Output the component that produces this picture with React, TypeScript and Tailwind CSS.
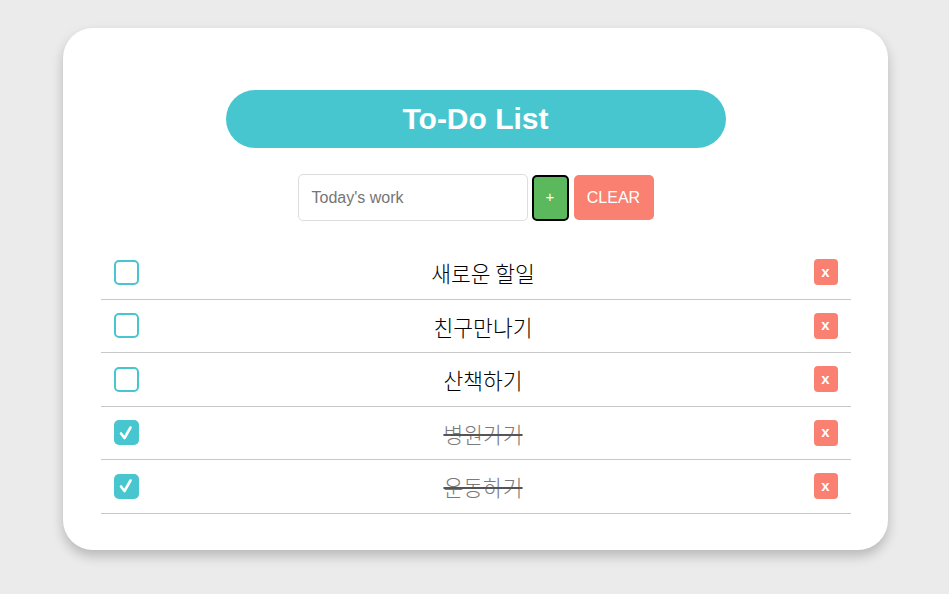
import React from "react";

const items = [
  { text: "새로운 할일", done: false },
  { text: "친구만나기", done: false },
  { text: "산책하기", done: false },
  { text: "병원가기", done: true },
  { text: "운동하기", done: true },
];

export default function App() {
  return (
    <div
      className="min-h-[594px] w-full bg-[#ebebeb] flex justify-center pt-[28px] pl-[2px]"
      style={{ fontFamily: '"Liberation Sans", Arial, "Noto Sans CJK KR", sans-serif' }}
    >
      <div className="w-[825px] h-[522px] bg-white rounded-[30px] shadow-[0_6px_12px_rgba(0,0,0,0.22)] flex flex-col items-center pt-[62px] px-[37px]">
        <div className="w-[500px] h-[58px] rounded-full bg-[#48c6cf] flex items-center justify-center">
          <h1 className="text-white font-bold text-[30px] leading-none">To-Do List</h1>
        </div>
        <div className="mt-[26px] flex items-center">
          <div className="w-[230px] h-[47px] border border-[#dddddd] rounded-[5px] flex items-center px-[13px]">
            <span className="text-[16px] text-[#757575]">Today's work</span>
          </div>
          <div className="ml-[4px] w-[37px] h-[46px] bg-[#5cb85c] border-2 border-black rounded-[5px] flex items-center justify-center text-white text-[15px]">
            +
          </div>
          <div className="ml-[5px] w-[80px] h-[45px] bg-[#fa8072] rounded-[5px] flex items-center justify-center text-white text-[16px]">
            CLEAR
          </div>
        </div>
        <div className="w-[750px] mt-[25px]">
          {items.map((it, i) => (
            <div
              key={i}
              className="h-[53.5px] border-b border-[#c8c8c8] flex items-center px-[13px]"
            >
              {it.done ? (
                <div className="w-[25px] h-[25px] rounded-[5px] bg-[#48c6cf] flex items-center justify-center">
                  <svg width="16" height="16" viewBox="0 0 16 16">
                    <path d="M3 8.5 L6.5 13 L12.5 2.5" stroke="white" strokeWidth="2.6" fill="none" strokeLinecap="round" strokeLinejoin="round" />
                  </svg>
                </div>
              ) : (
                <div className="w-[25px] h-[25px] rounded-[5px] border-2 border-[#48c6cf]" />
              )}
              <div
                className={
                  "flex-1 text-center text-[21.5px] font-light pl-[14px] pt-[2px] " +
                  (it.done ? "line-through text-[#7a7a7a] decoration-[#555] decoration-2" : "text-black")
                }
                style={{ fontFamily: '"Noto Sans CJK KR", "Liberation Sans", sans-serif' }}
              >
                {it.text}
              </div>
              <div className="w-[24px] h-[26px] rounded-[4px] bg-[#fa8072] flex items-center justify-center text-white font-bold text-[15px] leading-none pb-[2px]">
                x
              </div>
            </div>
          ))}
        </div>
      </div>
    </div>
  );
}
